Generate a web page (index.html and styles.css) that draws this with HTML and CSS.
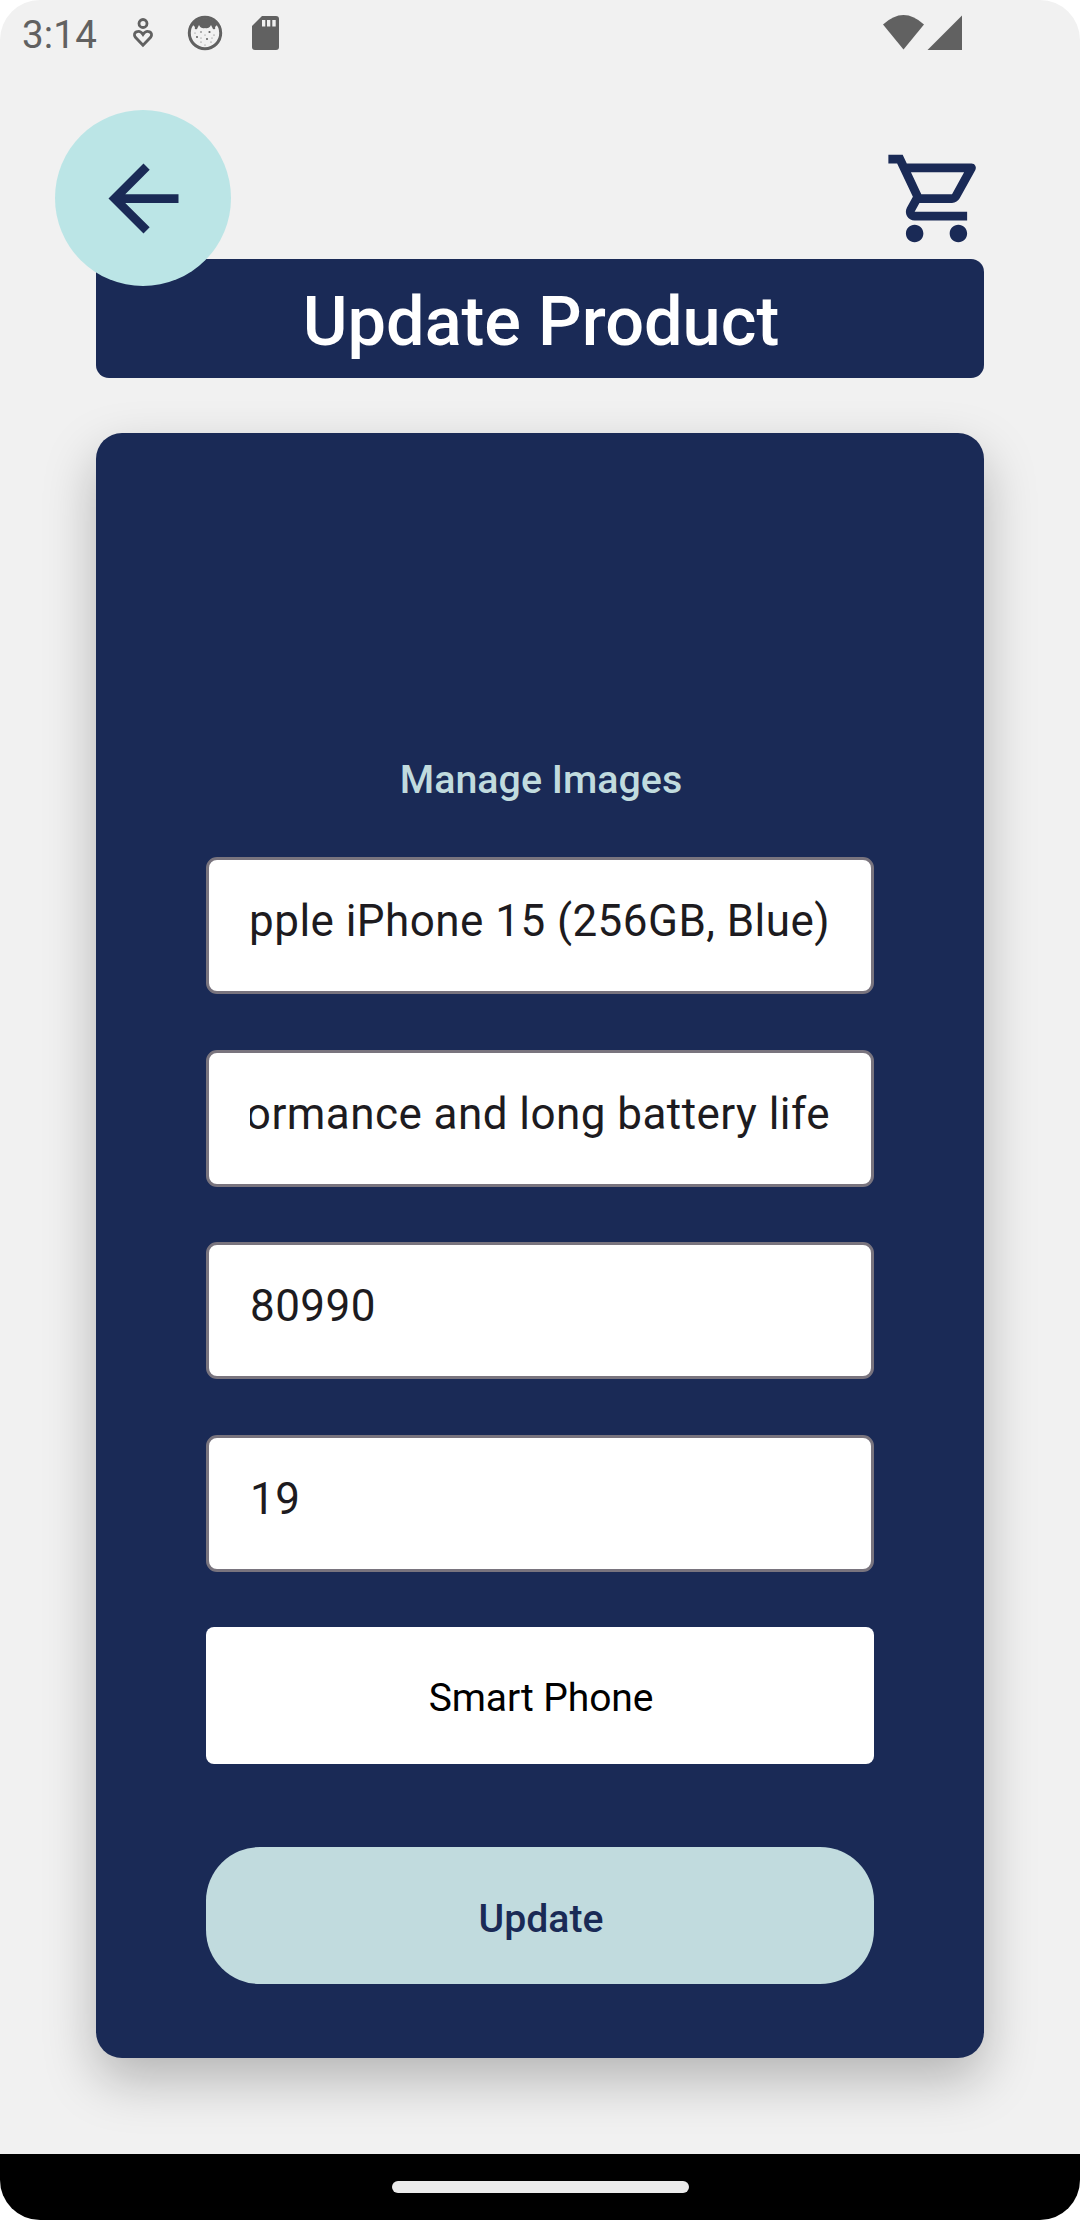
FILE: index.html
```html
<!DOCTYPE html>
<html lang="en">
<head>
<meta charset="utf-8">
<title>Update Product</title>
<link rel="stylesheet" href="styles.css">
</head>
<body>
<div class="screen">
  <div class="status">
    <span class="clock">3:14</span>
    <svg class="status-icon heart" width="22" height="32" viewBox="0 0 22 32" fill="none" stroke="#616161" stroke-width="2.8">
      <circle cx="11" cy="6.5" r="4"/>
      <path d="M11 28.300L3.400 20.300C-.2 15.600 7 11.500 11 17.500C15 11.500 22.200 15.600 18.600 20.300Z"/>
    </svg>
    <svg class="status-icon face" width="36" height="36" viewBox="0 0 36 36">
      <circle cx="18" cy="18" r="15.7" fill="none" stroke="#616161" stroke-width="3"/>
      <path d="M5 9Q18-3 31 9L28 12Q29 15 26 14L24 10Q22 14 18 13Q14 14 12 10L10 14Q7 15 8 12Z" fill="#616161"/>
      <g fill="#616161">
        <circle cx="14" cy="17" r=".8"/><circle cx="22.500" cy="17" r="1.100"/>
        <circle cx="10" cy="22" r="1"/><circle cx="20" cy="24" r="1"/><circle cx="27" cy="20" r=".6"/>
        <circle cx="14" cy="27" r=".6"/><circle cx="24" cy="27" r=".6"/><circle cx="18" cy="20" r=".5"/>
        <circle cx="8" cy="18" r=".5"/><circle cx="18" cy="30" r=".5"/><circle cx="25" cy="23" r=".5"/><circle cx="14" cy="23" r=".5"/>
      </g>
    </svg>
    <svg class="status-icon card-icon" width="27" height="34" viewBox="0 0 27 34">
      <path d="M10 0H24Q27 0 27 3V31Q27 34 24 34H3Q0 34 0 31V10Z" fill="#616161"/>
      <path d="M10 4h3.300v6.500h-3.300zM15 4h3.300v6.500h-3.300zM20.300 4h3.400v6.500h-3.400z" fill="#f1f1f1"/>
    </svg>
    <svg class="status-icon radio" width="80" height="36" viewBox="0 0 80 36" fill="#616161">
      <path d="M1 9.500Q21.500-9.500 42 9.500L21.500 34.500Z"/>
      <path d="M45.500 35L80 .5V35Z"/>
    </svg>
  </div>

  <header class="toolbar">
    <button class="back" aria-label="Back">
      <svg width="105" height="105" viewBox="0 0 24 24" fill="#1a2a56"><path d="M20 11H7.830l5.590-5.590L12 4l-8 8 8 8 1.410-1.410L7.830 13H20v-2z"/></svg>
    </button>
    <svg class="cart" width="105" height="105" viewBox="0 0 24 24" fill="#1a2a56"><path d="M15.550 13c.75 0 1.410-.41 1.750-1.030l3.580-6.490c.37-.66-.11-1.480-.87-1.480H5.210l-.94-2H1v2h2l3.600 7.590-1.350 2.440C4.520 15.370 5.480 17 7 17h12v-2H7l1.100-2h7.450zM6.160 6h12.150l-2.760 5H8.530L6.160 6zM7 18c-1.100 0-1.990.9-1.990 2S5.900 22 7 22s2-.9 2-2-.9-2-2-2zm10 0c-1.100 0-1.990.9-1.990 2s.89 2 1.990 2 2-.9 2-2-.9-2-2-2z"/></svg>
  </header>

  <h1 class="title">Update Product</h1>

  <main class="card">
    <div class="manage">Manage Images</div>
    <div class="fields">
      <div class="field scrolled"><span class="value">pple iPhone 15 (256GB, Blue)</span></div>
      <div class="field scrolled"><span class="value">ormance and long battery life</span></div>
      <div class="field"><span class="value">80990</span></div>
      <div class="field"><span class="value">19</span></div>
      <div class="select">Smart Phone</div>
    </div>
    <button class="update">Update</button>
  </main>

  <nav class="navbar"><div class="handle"></div></nav>
</div>
</body>
</html>
```
FILE: styles.css
```css
* { box-sizing: border-box; }
body { margin: 0; background: #fff; font-family: Roboto, sans-serif; }
button { border: 0; padding: 0; font-family: inherit; }
svg { display: block; flex: none; }

.screen {
  width: 1080px;
  height: 2220px;
  display: flex;
  flex-direction: column;
  background: #f1f1f1;
  border-radius: 40px;
  overflow: hidden;
}

.status {
  height: 110px;
  display: flex;
  align-items: flex-start;
  padding: 15px 118px 0 22px;
}
.clock {
  width: 110px;
  font-size: 38.500px;
  line-height: 40px;
  color: #616161;
  letter-spacing: .2px;
}
.heart { margin: 2px 33px 0 0; }
.face { margin-right: 29px; }
.card-icon { margin-top: 1px; }
.radio { margin-left: auto; }

.toolbar {
  position: relative;
  z-index: 1;
  height: 176px;
  margin-bottom: -27px;
  padding: 0 91px 0 55px;
  display: flex;
  justify-content: space-between;
  align-items: flex-start;
}
.back {
  width: 176px;
  height: 176px;
  border-radius: 50%;
  background: #bbe5e6;
  display: flex;
  align-items: center;
  justify-content: center;
}
.cart { margin-top: 35.500px; }

.title {
  margin: 0 96px 55px;
  height: 119px;
  border-radius: 13px;
  background: #1a2a56;
  color: #fff;
  font-size: 68.500px;
  font-weight: 500;
  line-height: 125px;
  text-align: center;
  padding-left: 2px;
}

.card {
  margin: 0 96px;
  height: 1625px;
  padding: 320px 110px 0;
  border-radius: 26px;
  background: #1a2a56;
  box-shadow: 0 22px 52px rgba(0, 0, 0, .25);
}
.manage {
  height: 104px;
  padding-left: 2px;
  color: #c1dbde;
  font-size: 39.400px;
  font-weight: 500;
  line-height: 54px;
  text-align: center;
}
.fields {
  display: grid;
  grid-template-columns: minmax(0, 1fr);
  gap: 55.500px;
}
.field {
  height: 137px;
  padding: 36px 41px 0;
  border: 3px solid #79747e;
  border-radius: 11px;
  background: #fff;
  color: #1d1b20;
  font-size: 44px;
  line-height: 50px;
  letter-spacing: .450px;
}
.value {
  display: flex;
  overflow: hidden;
  white-space: nowrap;
  height: 56px;
}
.scrolled .value { justify-content: flex-end; }
.select {
  height: 137px;
  border-radius: 8px;
  background: #fff;
  color: #000;
  font-size: 39px;
  line-height: 142px;
  letter-spacing: -.1px;
  text-align: center;
  padding-left: 2px;
}
.update {
  display: block;
  width: 100%;
  height: 137px;
  margin-top: 83px;
  padding: 6px 0 0 2px;
  border-radius: 54px;
  background: #c1dbde;
  color: #1a2a56;
  font-size: 39.200px;
  font-weight: 500;
  line-height: 60px;
}

.navbar {
  margin-top: auto;
  height: 66px;
  background: #000;
  display: flex;
  align-items: flex-start;
  justify-content: center;
  padding-top: 27px;
}
.handle {
  width: 297px;
  height: 12px;
  border-radius: 6px;
  background: #ebebeb;
}
```
